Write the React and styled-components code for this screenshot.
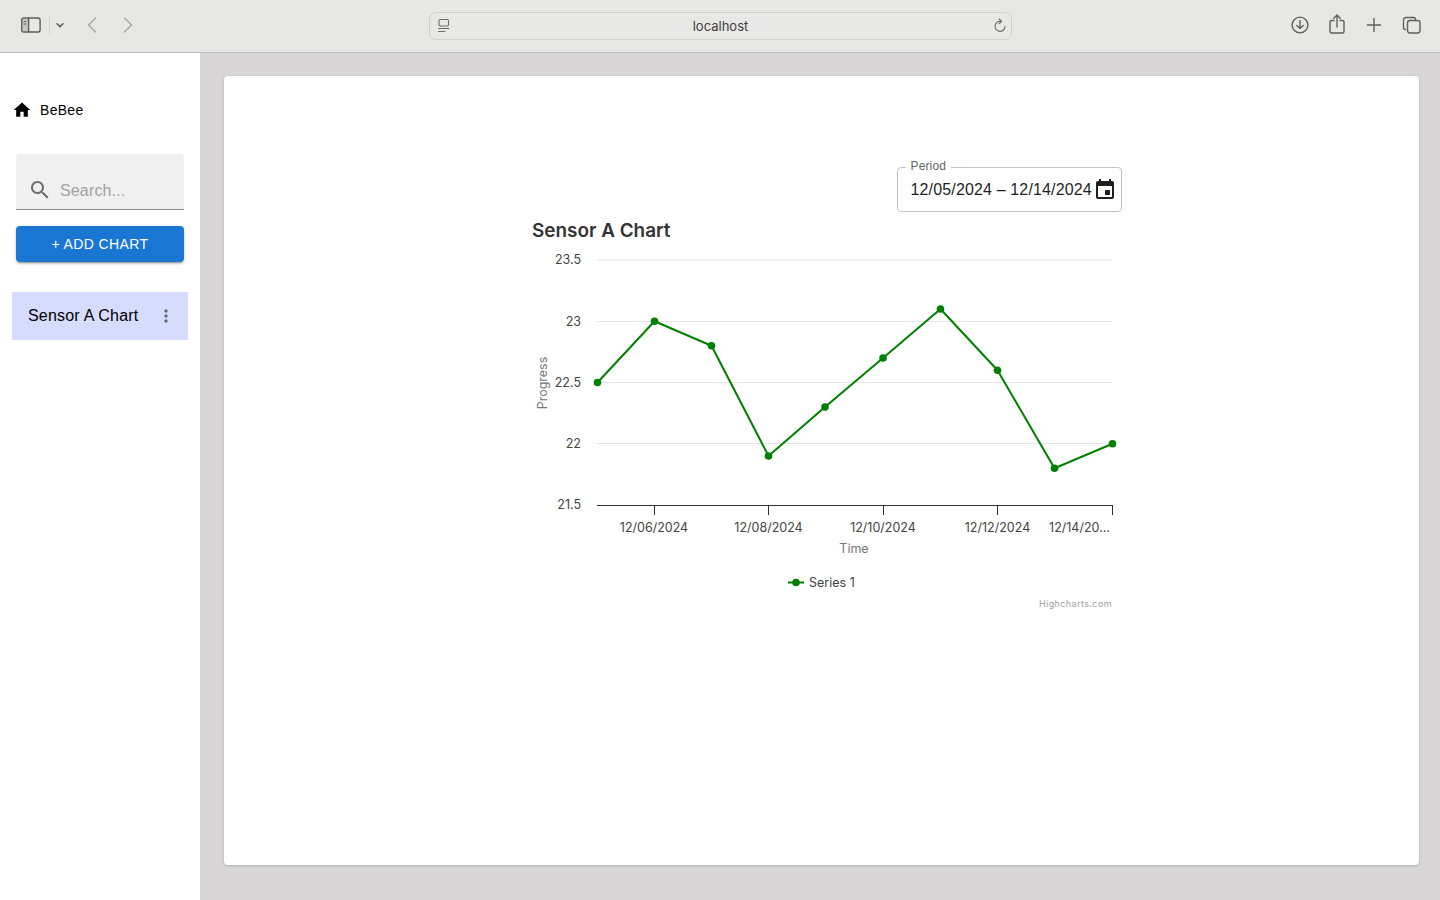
import React from 'react';
import styled, { createGlobalStyle } from 'styled-components';

const GlobalStyle = createGlobalStyle`
  html, body {
    margin: 0;
    padding: 0;
    height: 100%;
    overflow: hidden;
    background: #d8d6d7;
    font-family: "Liberation Sans", Arial, sans-serif;
  }
  * {
    box-sizing: border-box;
  }
`;

const Page = styled.div`
  display: flex;
  flex-direction: column;
  width: 1440px;
  height: 900px;
`;

const BrowserBar = styled.header`
  display: grid;
  grid-template-columns: 429px 583px 1fr;
  align-items: center;
  flex: none;
  height: 53px;
  padding-bottom: 2px;
  background: #e7e7e5;
  border-bottom: 1px solid #bcbcba;
`;

const BarLeft = styled.div`
  display: flex;
  align-items: center;
  padding: 0 0 0 20px;
`;

const BarRight = styled.div`
  display: flex;
  align-items: center;
  justify-content: flex-end;
  gap: 17px;
  padding-right: 19px;
`;

const Divider = styled.span`
  width: 1px;
  height: 18px;
  margin: 0 5px 0 7px;
  background: #d3d3d1;
`;

const AddressBar = styled.div`
  display: flex;
  align-items: center;
  justify-content: space-between;
  position: relative;
  height: 28px;
  margin-top: 1px;
  padding: 0 4px 0 6px;
  border: 1px solid #cfcfcd;
  border-radius: 7px;
  background: #e8e8e6;
`;

const AddressText = styled.span`
  position: absolute;
  left: 0;
  right: 0;
  top: 4px;
  text-align: center;
  font-family: Inter, "Liberation Sans", sans-serif;
  font-size: 13px;
  line-height: 18px;
  color: #3e3e3e;
`;

const ToolIcon = styled.svg`
  display: block;
  flex: none;
  fill: none;
  stroke: ${(p) => p.$stroke || '#5f5f5f'};
  stroke-width: ${(p) => p.$weight || 1.4};
  stroke-linecap: round;
  stroke-linejoin: round;
  margin-left: ${(p) => p.$offset || 0}px;
`;

const Body = styled.div`
  display: flex;
  flex: 1;
  min-height: 0;
`;

const Sidebar = styled.aside`
  display: flex;
  flex-direction: column;
  flex: none;
  width: 200px;
  padding: 0 12px;
  background: #fff;
`;

const Brand = styled.div`
  display: flex;
  align-items: center;
  gap: 8px;
  height: 24px;
  margin: 45px 0 0 -1px;
  padding-left: 1px;
  font-size: 14px;
  letter-spacing: 0.3px;
  color: #000;
`;

const MuiIcon = styled.svg`
  display: block;
  flex: none;
  fill: ${(p) => p.$color || '#000'};
`;

const SearchField = styled.div`
  display: flex;
  align-items: center;
  gap: 8px;
  height: 56px;
  margin: 32px 4px 0;
  padding: 16px 12px 0 12px;
  background: #f0f0f0;
  border-bottom: 1px solid #8c8c8c;
  border-radius: 4px 4px 0 0;
`;

const SearchPlaceholder = styled.span`
  margin-top: 2px;
  font-size: 16px;
  letter-spacing: 0.15px;
  color: #a2a2a2;
`;

const AddButton = styled.button`
  height: 36px;
  margin: 16px 4px 0;
  border: 0;
  border-radius: 4px;
  background: #1976d2;
  color: #fff;
  font-family: inherit;
  font-size: 14px;
  font-weight: 400;
  letter-spacing: 0.4px;
  box-shadow: 0 3px 1px -2px rgba(0, 0, 0, 0.2), 0 2px 2px rgba(0, 0, 0, 0.14), 0 1px 5px rgba(0, 0, 0, 0.12);
`;

const ChartItem = styled.div`
  display: flex;
  align-items: center;
  justify-content: space-between;
  height: 48px;
  margin-top: 30px;
  padding: 0 12px 0 16px;
  background: #d5dcfe;
  font-size: 16px;
  letter-spacing: 0.2px;
  color: #000;
`;

const Main = styled.main`
  flex: 1;
  min-width: 0;
  padding: 23px 21px 35px 24px;
`;

const Card = styled.section`
  display: flex;
  flex-direction: column;
  align-items: center;
  height: 100%;
  padding-top: 91px;
  background: #fff;
  border-radius: 4px;
  box-shadow: 0 1px 3px rgba(0, 0, 0, 0.18);
`;

const ChartColumn = styled.div`
  display: flex;
  flex-direction: column;
  width: 600px;
`;

const PeriodField = styled.div`
  display: flex;
  align-items: center;
  justify-content: space-between;
  position: relative;
  align-self: flex-end;
  width: 225px;
  height: 45px;
  padding: 0 4px 0 13px;
  border: 1px solid #c4c4c4;
  border-radius: 4px;
  font-size: 16px;
  letter-spacing: 0.15px;
  color: #1f1f1f;
  white-space: nowrap;
`;

const PeriodLabel = styled.span`
  position: absolute;
  left: 8px;
  top: -10px;
  padding: 0 5px;
  background: #fff;
  font-size: 12px;
  line-height: 16px;
  color: #666;
`;

const ChartSvg = styled.svg`
  display: block;
  margin-top: 4px;
  font-family: Inter, "Liberation Sans", sans-serif;
`;

const ChartTitle = styled.text`
  font-size: 18.9px;
  font-weight: 600;
  fill: #333;
`;

const AxisLabel = styled.text`
  font-size: 12.5px;
  fill: #444;
  text-anchor: ${(p) => p.$anchor || 'middle'};
`;

const AxisTitle = styled.text`
  font-size: 12.5px;
  fill: #777;
  text-anchor: middle;
`;

const Credit = styled.text`
  font-size: 9px;
  letter-spacing: 0.4px;
  fill: #a0a0a0;
  text-anchor: end;
`;

const yTicks = [
  { label: '23.5', y: 260, textY: 264, line: true },
  { label: '23', y: 321.5, textY: 326, line: true },
  { label: '22.5', y: 382.5, textY: 387, line: true },
  { label: '22', y: 443.5, textY: 448, line: true },
  { label: '21.5', y: 505, textY: 509, line: false },
];

const xTicks = [
  { label: '12/06/2024', x: 654.5, textX: 654 },
  { label: '12/08/2024', x: 768.5, textX: 768.5 },
  { label: '12/10/2024', x: 883.5, textX: 883 },
  { label: '12/12/2024', x: 997.5, textX: 997.5 },
  { label: '12/14/20...', x: 1112.5, textX: 1079.5 },
];

const values = [22.5, 23, 22.8, 21.9, 22.3, 22.7, 23.1, 22.6, 21.8, 22];
const xs = [597.5, 654.5, 711.5, 768.5, 825, 883, 940.5, 997.5, 1054.5, 1112.5];
const points = values.map((v, i) => ({
  x: xs[i],
  y: 260 + (23.5 - v) * 122.5,
}));
const GREEN = '#008000';

function Chart() {
  return (
    <ChartSvg width="600" height="400" viewBox="522 216 600 400">
      <ChartTitle x="532" y="237">Sensor A Chart</ChartTitle>

      {yTicks.map((t) => (
        <g key={t.label}>
          {t.line && <line x1="597" x2="1112" y1={t.y} y2={t.y} stroke="#e6e6e6" />}
          <AxisLabel $anchor="end" x="581" y={t.textY}>{t.label}</AxisLabel>
        </g>
      ))}

      <line x1="597" x2="1113" y1="505.5" y2="505.5" stroke="#333" />
      {xTicks.map((t) => (
        <g key={t.label}>
          <line x1={t.x} x2={t.x} y1="505" y2="515" stroke="#333" />
          <AxisLabel x={t.textX} y="532">{t.label}</AxisLabel>
        </g>
      ))}

      <AxisTitle x="854" y="553">Time</AxisTitle>
      <AxisTitle transform="rotate(-90 547 383)" x="547" y="383">Progress</AxisTitle>

      <polyline
        points={points.map((p) => `${p.x},${p.y}`).join(' ')}
        fill="none"
        stroke={GREEN}
        strokeWidth="2"
        strokeLinejoin="round"
      />
      {points.map((p) => (
        <circle key={p.x} cx={p.x} cy={p.y} r="3.8" fill={GREEN} />
      ))}

      <line x1="788" x2="804" y1="582.5" y2="582.5" stroke={GREEN} strokeWidth="2" />
      <circle cx="796" cy="582.5" r="3.8" fill={GREEN} />
      <AxisLabel $anchor="start" x="809" y="587">Series 1</AxisLabel>

      <Credit x="1112" y="607">Highcharts.com</Credit>
    </ChartSvg>
  );
}

export default function App() {
  return (
    <Page>
      <GlobalStyle />
      <BrowserBar>
        <BarLeft>
          <ToolIcon width="22" height="18" viewBox="0 0 22 18">
            <rect x="1.7" y="2" width="18.4" height="14" rx="2.2" />
            <rect x="2" y="2.4" width="6.6" height="13.2" fill="#8d8d8d" stroke="none" opacity="0.35" />
            <line x1="8.6" y1="2" x2="8.6" y2="16" />
            <line x1="4" y1="5.5" x2="6" y2="5.5" strokeWidth="1" />
            <line x1="4" y1="8" x2="6" y2="8" strokeWidth="1" />
          </ToolIcon>
          <Divider />
          <ToolIcon width="10" height="10" viewBox="0 0 10 10" $weight="1.5">
            <path d="M2 3.8 5 6.6 8 3.8" />
          </ToolIcon>
          <ToolIcon width="12" height="18" viewBox="0 0 12 18" $offset="21" $stroke="#a8a8a8" $weight="1.5">
            <path d="M9.5 2 2.5 9 9.5 16" />
          </ToolIcon>
          <ToolIcon width="12" height="18" viewBox="0 0 12 18" $offset="24" $stroke="#a8a8a8" $weight="1.5">
            <path d="M2.5 2 9.5 9 2.5 16" />
          </ToolIcon>
        </BarLeft>

        <AddressBar>
          <ToolIcon width="16" height="16" viewBox="0 0 16 16" $stroke="#6b6b6b" $weight="1.1">
            <rect x="3" y="1.5" width="9.5" height="6.5" rx="1.2" />
            <line x1="2.5" y1="10.5" x2="13" y2="10.5" />
            <line x1="2.5" y1="13.5" x2="9" y2="13.5" />
          </ToolIcon>
          <AddressText>localhost</AddressText>
          <ToolIcon width="14" height="16" viewBox="0 0 14 16" $stroke="#6b6b6b" $weight="1.1">
            <path d="M7.6 3.4A5 5 0 1 0 12 8.4" />
            <path d="M6.2 1 8.6 3.4 6.2 5.6" />
          </ToolIcon>
        </AddressBar>

        <BarRight>
          <ToolIcon width="20" height="20" viewBox="0 0 20 20">
            <circle cx="10" cy="10" r="7.900" />
            <path d="M10 5.500v8M6.800 10.400 10 13.600l3.200-3.200" />
          </ToolIcon>
          <ToolIcon width="20" height="22" viewBox="-1 0 20 22">
            <path d="M6 6.500H3.600a1.600 1.600 0 0 0-1.600 1.600v9.300a1.600 1.600 0 0 0 1.600 1.600h10.800a1.600 1.600 0 0 0 1.600-1.600V8.100a1.600 1.600 0 0 0-1.600-1.600H12" />
            <path d="M9 13V1M5.800 4.200 9 1l3.200 3.200" />
          </ToolIcon>
          <ToolIcon width="20" height="20" viewBox="0 0 20 20">
            <path d="M10 3.500v13M3.500 10h13" />
          </ToolIcon>
          <ToolIcon width="20" height="20" viewBox="0 0 20 20">
            <path d="M4.500 14.500A2 2 0 0 1 2.500 12.500V5A2.500 2.500 0 0 1 5 2.500h7.500a2 2 0 0 1 2 2" />
            <rect x="6.500" y="5.500" width="12.500" height="12.500" rx="2.400" />
          </ToolIcon>
        </BarRight>
      </BrowserBar>

      <Body>
        <Sidebar>
          <Brand>
            <MuiIcon width="20" height="20" viewBox="0 0 24 24">
              <path d="M10 20v-6h4v6h5v-8h3L12 3 2 12h3v8z" />
            </MuiIcon>
            BeBee
          </Brand>
          <SearchField>
            <MuiIcon width="24" height="24" viewBox="0 0 24 24" $color="#6e6e6e">
              <path d="M15.500 14h-.79l-.28-.27C15.410 12.590 16 11.110 16 9.500 16 5.910 13.090 3 9.500 3S3 5.910 3 9.500 5.910 16 9.500 16c1.610 0 3.090-.59 4.230-1.570l.27.28v.79l5 4.990L20.490 19l-4.990-5zm-6 0C7.010 14 5 11.990 5 9.500S7.010 5 9.500 5 14 7.010 14 9.500 11.990 14 9.500 14z" />
            </MuiIcon>
            <SearchPlaceholder>Search...</SearchPlaceholder>
          </SearchField>
          <AddButton>+ ADD CHART</AddButton>
          <ChartItem>
            Sensor A Chart
            <MuiIcon width="20" height="20" viewBox="0 0 24 24" $color="#6b6b6b">
              <path d="M12 8c1.100 0 2-.9 2-2s-.9-2-2-2-2 .9-2 2 .9 2 2 2zm0 2c-1.100 0-2 .9-2 2s.9 2 2 2 2-.9 2-2-.9-2-2-2zm0 6c-1.100 0-2 .9-2 2s.9 2 2 2 2-.9 2-2-.9-2-2-2z" />
            </MuiIcon>
          </ChartItem>
        </Sidebar>

        <Main>
          <Card>
            <ChartColumn>
              <PeriodField>
                <PeriodLabel>Period</PeriodLabel>
                12/05/2024 – 12/14/2024
                <MuiIcon width="24" height="24" viewBox="0 0 24 24" $color="#1f1f1f">
                  <path d="M17 12h-5v5h5v-5zM16 1v2H8V1H6v2H5c-1.110 0-1.990.9-1.990 2L3 19c0 1.100.89 2 2 2h14c1.100 0 2-.9 2-2V5c0-1.100-.9-2-2-2h-1V1h-2zm3 18H5V8h14v11z" />
                </MuiIcon>
              </PeriodField>
              <Chart />
            </ChartColumn>
          </Card>
        </Main>
      </Body>
    </Page>
  );
}
